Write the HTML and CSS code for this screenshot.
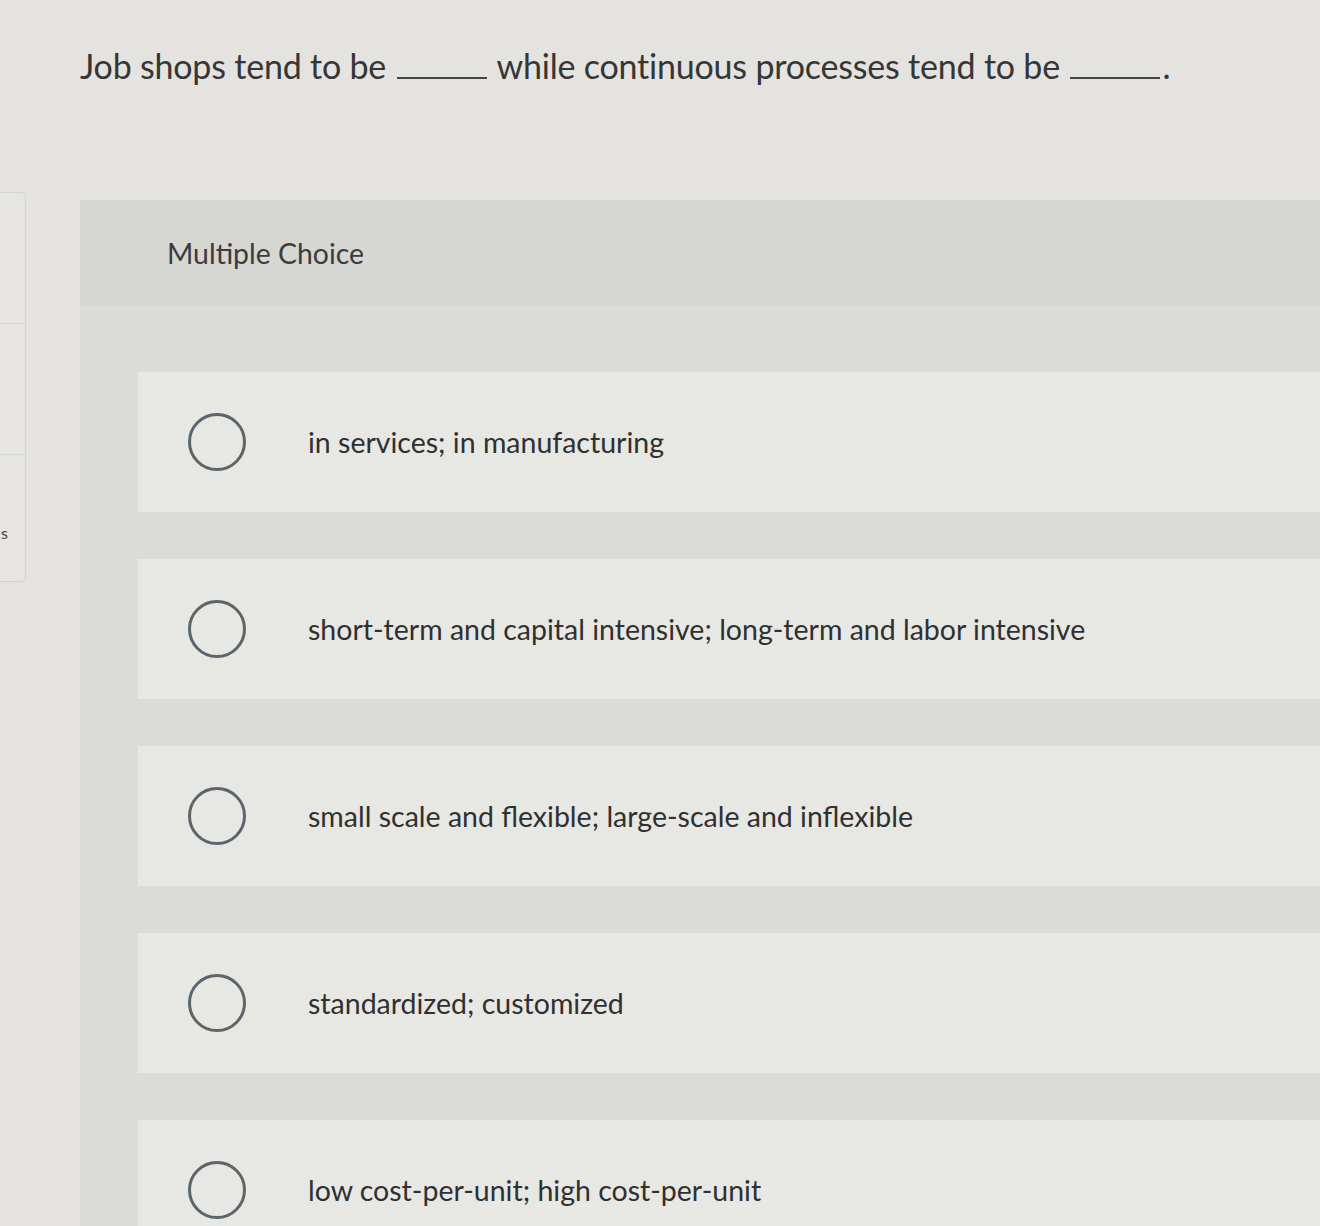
FILE: index.html
```html
<!DOCTYPE html>
<html>
<head>
<meta charset="utf-8">
<link rel="stylesheet" href="styles.css">
</head>
<body>
<div class="page">
  <aside class="side">
    <div class="side-cell"></div>
    <div class="side-cell"></div>
    <div class="side-cell last"><span class="side-frag">s</span></div>
  </aside>
  <main class="main">
    <h1 class="question">Job shops tend to be <span class="blank"></span> while continuous processes tend to be <span class="blank"></span>.</h1>
    <section class="panel">
      <div class="panel-head">Multiple Choice</div>
      <div class="options">
        <label class="option"><span class="radio"></span><span class="opt-text">in services; in manufacturing</span></label>
        <label class="option"><span class="radio"></span><span class="opt-text">short-term and capital intensive; long-term and labor intensive</span></label>
        <label class="option"><span class="radio"></span><span class="opt-text">small scale and flexible; large-scale and inflexible</span></label>
        <label class="option"><span class="radio"></span><span class="opt-text">standardized; customized</span></label>
        <label class="option"><span class="radio"></span><span class="opt-text">low cost-per-unit; high cost-per-unit</span></label>
      </div>
    </section>
  </main>
</div>
</body>
</html>
```
FILE: styles.css
```css
html, body {
  margin: 0;
  padding: 0;
}
body {
  background: #e4e3e0;
  font-family: Lato, "Open Sans", sans-serif;
  color: #333;
  width: 1320px;
  height: 1226px;
  overflow: hidden;
}
.page {
  position: relative;
  display: flex;
  height: 1226px;
}
.side {
  position: absolute;
  left: -8px;
  top: 192px;
  width: 32px;
  height: 388px;
  border: 1px solid #d3d3d0;
  border-radius: 4px;
  display: flex;
  flex-direction: column;
  background: #e6e5e2;
}
.side-cell {
  height: 130px;
  border-bottom: 1px solid #d6d6d3;
}
.side-cell.last {
  border-bottom: none;
  flex: 1;
  position: relative;
}
.side-frag {
  position: absolute;
  left: 8px;
  top: 68px;
  font-size: 16px;
  color: #444;
}
.main {
  flex: 1;
  padding-left: 80px;
  display: flex;
  flex-direction: column;
}
.question {
  margin: 0;
  padding-top: 45px;
  height: 200px;
  box-sizing: border-box;
  font-size: 34px;
  font-weight: 400;
  color: #363636;
  letter-spacing: -0.2px;
  white-space: nowrap;
  flex: none;
}
.blank {
  display: inline-block;
  width: 90px;
  border-bottom: 2px solid #444;
  vertical-align: baseline;
  margin: 0 2px;
}
.panel {
  background: #dbdbd8;
  flex: 1;
}
.panel-head {
  background: #d6d6d3;
  height: 105px;
  padding-left: 87px;
  display: flex;
  align-items: center;
  font-size: 28.4px;
  color: #3c3c3c;
}
.options {
  padding: 67px 0 0 58px;
  display: flex;
  flex-direction: column;
  gap: 47px;
}
.option {
  background: #e7e7e4;
  height: 140px;
  display: flex;
  align-items: center;
  padding-left: 50px;
  flex: none;
}
.radio {
  width: 52px;
  height: 52px;
  border: 3px solid #5c6569;
  border-radius: 50%;
  flex: none;
}
.opt-text {
  margin-left: 62px;
  font-size: 28.5px;
  color: #303030;
}
```
